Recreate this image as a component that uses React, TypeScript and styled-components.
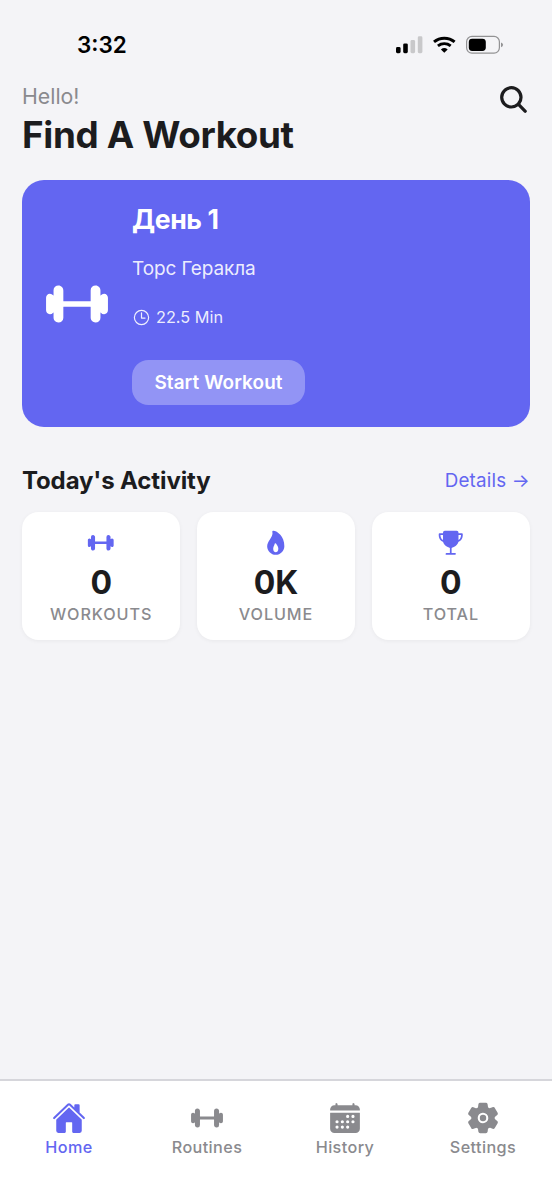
import React from "react";
import styled, { createGlobalStyle } from "styled-components";
import {
  IoBarbell,
  IoCalendar,
  IoFlame,
  IoHome,
  IoSearch,
  IoSettings,
  IoTimeOutline,
  IoTrophy,
} from "react-icons/io5";

const accent = "#6366f1";
const ink = "#1c1c1e";
const muted = "#8a8a8e";

const GlobalStyle = createGlobalStyle`
  * { box-sizing: border-box; }
  body {
    margin: 0;
    background: #f4f4f7;
    font-family: Inter, "Liberation Sans", sans-serif;
  }
  svg { display: block; flex: none; }
`;

interface TextProps {
  $size: number;
  $line: number;
  $weight?: number;
  $color?: string;
  $spacing?: number;
  $top?: number;
}

const Text = styled.span<TextProps>`
  display: block;
  white-space: nowrap;
  margin-top: ${(p) => p.$top ?? 0}px;
  font-size: ${(p) => p.$size}px;
  line-height: ${(p) => p.$line}px;
  font-weight: ${(p) => p.$weight ?? 400};
  color: ${(p) => p.$color ?? ink};
  letter-spacing: ${(p) => p.$spacing ?? 0}px;
`;

const Screen = styled.div`
  display: flex;
  flex-direction: column;
  height: 1200px;
  width: 552px;
  overflow: hidden;
`;

const StatusBar = styled.div`
  display: flex;
  align-items: center;
  justify-content: space-between;
  height: 82px;
  padding: 8px 48px 0 77px;
`;

const Header = styled.header`
  display: flex;
  justify-content: space-between;
  align-items: flex-start;
  height: 98px;
  padding: 0 22px;
`;

const SearchButton = styled.button`
  display: flex;
  border: 0;
  padding: 0;
  margin-top: 1px;
  background: none;
  color: ${ink};
`;

const Hero = styled.section`
  display: flex;
  align-items: center;
  height: 247px;
  margin: 0 22px;
  padding: 0 22px;
  border-radius: 22px;
  background: ${accent};
  color: #fff;
`;

const HeroBody = styled.div`
  display: flex;
  flex-direction: column;
  align-items: flex-start;
  height: 203px;
  margin-left: 22px;
`;

const Duration = styled.div`
  display: flex;
  align-items: center;
  gap: 5px;
  margin: 24px 0 auto;
  color: rgba(255, 255, 255, 0.9);
`;

const StartButton = styled.button`
  width: 173px;
  height: 45px;
  display: flex;
  align-items: center;
  justify-content: center;
  border: 0;
  padding: 1px 0 0;
  border-radius: 16.5px;
  background: rgba(255, 255, 255, 0.3);
  font-family: inherit;
`;

const SectionHead = styled.div`
  display: flex;
  align-items: center;
  justify-content: space-between;
  height: 34px;
  margin: 37px 22px 14px;
`;

const Stats = styled.div`
  display: grid;
  grid-template-columns: repeat(3, 1fr);
  gap: 16.5px;
  padding: 0 22px;
`;

const StatCard = styled.div`
  display: flex;
  flex-direction: column;
  align-items: center;
  height: 128px;
  padding-top: 17px;
  border-radius: 16.5px;
  background: #fff;
  color: ${accent};
  box-shadow: 0 1px 4px rgba(0, 0, 0, 0.05);
`;

const TabBar = styled.nav`
  display: grid;
  grid-template-columns: repeat(4, 1fr);
  height: 121px;
  margin-top: auto;
  padding-top: 19.5px;
  border-top: 2px solid #d6d6db;
  background: #fff;
`;

const Tab = styled.a<{ $active?: boolean }>`
  display: flex;
  flex-direction: column;
  align-items: center;
  color: ${(p) => (p.$active ? accent : muted)};
`;

const stats = [
  { Icon: IoBarbell, value: "0", label: "WORKOUTS" },
  { Icon: IoFlame, value: "0K", label: "VOLUME" },
  { Icon: IoTrophy, value: "0", label: "TOTAL" },
];

const tabs = [
  { Icon: IoHome, label: "Home" },
  { Icon: IoBarbell, label: "Routines" },
  { Icon: IoCalendar, label: "History" },
  { Icon: IoSettings, label: "Settings" },
];

const StatusGlyphs = () => (
  <svg width="110" height="20" viewBox="0 0 110 20">
    <rect x="2" y="12" width="4.6" height="6.2" rx="1.4" fill="#000" />
    <rect x="9.2" y="8.4" width="4.6" height="9.8" rx="1.4" fill="#000" />
    <rect x="16.5" y="5" width="4.6" height="13.2" rx="1.4" fill="#c8c8ca" />
    <rect x="23.8" y="1.3" width="4.6" height="16.9" rx="1.4" fill="#c8c8ca" />
    <g fill="none" stroke="#000">
      <path d="M40 6.9A16.2 16.2 0 0 1 60.6 6.9" strokeWidth="3" />
      <path d="M43.9 10.9A10.5 10.5 0 0 1 56.7 10.9" strokeWidth="2.9" />
    </g>
    <path d="M50.3 17.8L46.9 14.4A5.2 5.2 0 0 1 53.7 14.4Z" fill="#000" />
    <rect x="72.6" y="1.4" width="32.8" height="16.8" rx="5.4" fill="none" stroke="#929294" strokeWidth="1.2" />
    <rect x="74.8" y="3.7" width="17" height="12.3" rx="3.4" fill="#000" />
    <path d="M107 7.4Q109.1 8 109.1 9.8T107 12.2Z" fill="#929294" />
  </svg>
);

export default function App() {
  return (
    <Screen>
      <GlobalStyle />
      <StatusBar>
        <Text $size={22.5} $line={28} $weight={600} $color="#000">3:32</Text>
        <StatusGlyphs />
      </StatusBar>
      <Header>
        <div>
          <Text $size={21.3} $line={28} $color={muted}>Hello!</Text>
          <Text $size={36.8} $line={50} $weight={700} $spacing={-0.34}>Find A Workout</Text>
        </div>
        <SearchButton aria-label="Search">
          <IoSearch size={33} />
        </SearchButton>
      </Header>
      <Hero>
        <IoBarbell size={66} />
        <HeroBody>
          <Text $size={26.6} $line={34} $weight={700} $color="#fff" $spacing={-0.4}>День 1</Text>
          <Text $size={19} $line={26} $color="rgba(255,255,255,0.9)" $top={20} $spacing={-0.12}>Торс Геракла</Text>
          <Duration>
            <IoTimeOutline size={19} />
            <Text $size={16.3} $line={22} $color="inherit">22.5 Min</Text>
          </Duration>
          <StartButton>
            <Text $size={18.9} $line={26} $weight={600} $color="#fff" $spacing={0.1}>Start Workout</Text>
          </StartButton>
        </HeroBody>
      </Hero>
      <SectionHead>
        <Text $size={24} $line={34} $weight={700} $spacing={-0.12}>Today's Activity</Text>
        <Text as="a" $size={18.8} $line={26} $color={accent} $spacing={0.2}>Details →</Text>
      </SectionHead>
      <Stats>
        {stats.map(({ Icon, value, label }) => (
          <StatCard key={label}>
            <Icon size={27.5} />
            <Text $size={32} $line={42} $weight={700} $top={5}>{value}</Text>
            <Text $size={16.2} $line={22} $weight={500} $color={muted} $top={-0.6} $spacing={0.9}>{label}</Text>
          </StatCard>
        ))}
      </Stats>
      <TabBar>
        {tabs.map(({ Icon, label }, i) => (
          <Tab key={label} $active={i === 0}>
            <Icon size={34} />
            <Text $size={16.2} $line={22} $weight={500} $color="inherit" $top={1.5} $spacing={0.4}>{label}</Text>
          </Tab>
        ))}
      </TabBar>
    </Screen>
  );
}
